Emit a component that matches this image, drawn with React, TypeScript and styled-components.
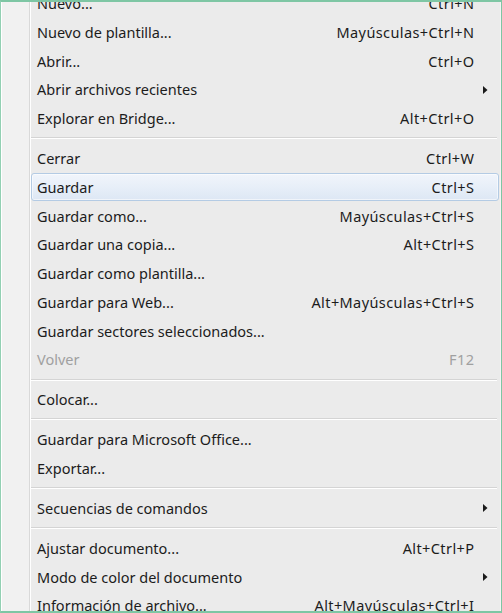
import React from "react";
import styled, { createGlobalStyle } from "styled-components";

const Global = createGlobalStyle`
  html, body { margin: 0; padding: 0; background: #ffffff; }
  #root { width: 502px; height: 613px; }
`;

const Frame = styled.div`
  box-sizing: border-box;
  width: 502px;
  height: 613px;
  overflow: hidden;
  border-top: 2px solid #7ec6a4;
  border-bottom: 2px solid #7ec6a4;
  border-left: 1px solid #93d0b3;
  border-right: 1px solid #7ec6a4;
  background: #ebebeb;
`;

const Menu = styled.div`
  box-sizing: border-box;
  min-height: 100%;
  margin-top: -13px;
  box-shadow: inset 1px 0 0 #ffffff, inset -1px 0 0 #f4f4f4;
  background: linear-gradient(
    to right,
    #f1f1f1 0px,
    #f1f1f1 28px,
    #d9d9d9 28px,
    #d9d9d9 29px,
    #ffffff 29px,
    #ffffff 30px,
    #ebebeb 30px
  );
  font-family: "Noto Sans", "Open Sans", sans-serif;
  font-size: 14.5px;
  color: #1c1c1c;
`;

const Row = styled.div<{ $active?: boolean; $disabled?: boolean }>`
  box-sizing: border-box;
  height: 28.75px;
  margin: 0 2px 0 30px;
  padding-left: 5px;
  display: grid;
  grid-template-columns: 1fr auto 24px;
  align-items: center;
  border: 1px solid transparent;
  border-radius: 3px;
  color: ${(p) => (p.$disabled ? "#a0a0a0" : "#1c1c1c")};
  ${(p) =>
    p.$active &&
    `
    border-color: #b4cbe4;
    background: linear-gradient(to bottom, #f1f5fb 0%, #e6eef8 55%, #dde7f4 100%);
    box-shadow: inset 0 0 0 1px rgba(255,255,255,0.55);
  `}
`;

const Label = styled.span`
  white-space: nowrap;
  line-height: 1;
`;

const Shortcut = styled.span`
  white-space: nowrap;
  text-align: right;
  line-height: 1;
  letter-spacing: 0.4px;
  margin-right: -0.4px;
`;

const ArrowCell = styled.span`
  display: flex;
  align-items: center;
  padding-left: 9px;
`;

const Separator = styled.div`
  height: 11.2px;
  margin: 0 4px 0 30px;
  display: flex;
  flex-direction: column;
  justify-content: center;
  &::before {
    content: "";
    display: block;
    height: 1px;
    background: #d4d4d4;
  }
  &::after {
    content: "";
    display: block;
    height: 1px;
    background: #ffffff;
  }
`;

const Arrow = () => (
  <svg width="5" height="8" viewBox="0 0 5 8">
    <path d="M0 0 L4.5 4 L0 8 Z" fill="#1a1a1a" />
  </svg>
);

type Item =
  | { sep: true }
  | {
      sep?: false;
      label: string;
      shortcut?: string;
      sub?: boolean;
      active?: boolean;
      disabled?: boolean;
    };

const items: Item[] = [
  { label: "Nuevo...", shortcut: "Ctrl+N" },
  { label: "Nuevo de plantilla...", shortcut: "Mayúsculas+Ctrl+N" },
  { label: "Abrir...", shortcut: "Ctrl+O" },
  { label: "Abrir archivos recientes", sub: true },
  { label: "Explorar en Bridge...", shortcut: "Alt+Ctrl+O" },
  { sep: true },
  { label: "Cerrar", shortcut: "Ctrl+W" },
  { label: "Guardar", shortcut: "Ctrl+S", active: true },
  { label: "Guardar como...", shortcut: "Mayúsculas+Ctrl+S" },
  { label: "Guardar una copia...", shortcut: "Alt+Ctrl+S" },
  { label: "Guardar como plantilla..." },
  { label: "Guardar para Web...", shortcut: "Alt+Mayúsculas+Ctrl+S" },
  { label: "Guardar sectores seleccionados..." },
  { label: "Volver", shortcut: "F12", disabled: true },
  { sep: true },
  { label: "Colocar..." },
  { sep: true },
  { label: "Guardar para Microsoft Office..." },
  { label: "Exportar..." },
  { sep: true },
  { label: "Secuencias de comandos", sub: true },
  { sep: true },
  { label: "Ajustar documento...", shortcut: "Alt+Ctrl+P" },
  { label: "Modo de color del documento", sub: true },
  { label: "Información de archivo...", shortcut: "Alt+Mayúsculas+Ctrl+I" },
];

export default function App() {
  return (
    <>
      <Global />
      <Frame>
        <Menu>
          {items.map((it, i) =>
            it.sep ? (
              <Separator key={i} />
            ) : (
              <Row key={i} $active={it.active} $disabled={it.disabled}>
                <Label>{it.label}</Label>
                <Shortcut>{it.shortcut ?? ""}</Shortcut>
                <ArrowCell>{it.sub ? <Arrow /> : null}</ArrowCell>
              </Row>
            )
          )}
        </Menu>
      </Frame>
    </>
  );
}
